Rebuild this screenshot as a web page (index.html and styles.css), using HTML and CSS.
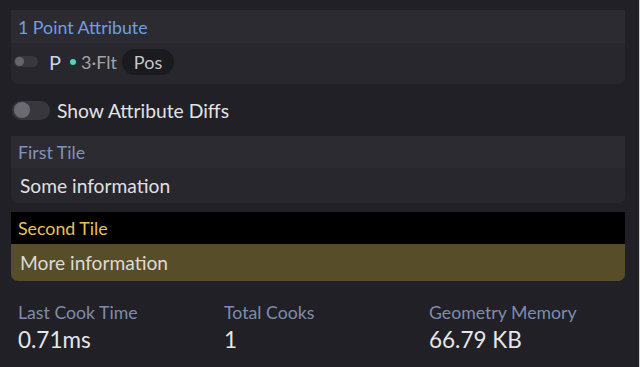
FILE: index.html
```html
<!DOCTYPE html>
<html>
<head>
<meta charset="utf-8">
<link rel="stylesheet" href="styles.css">
</head>
<body>
<div class="page">
  <div class="panel">
    <section class="card">
      <div class="card-head attr-title">1 Point Attribute</div>
      <div class="card-body attr-row">
        <span class="mini-toggle"><span class="mini-knob"></span></span>
        <span class="attr-name">P</span>
        <span class="dot"></span>
        <span class="attr-type">3·Flt</span>
        <span class="pill">Pos</span>
      </div>
    </section>

    <div class="diff-row">
      <span class="toggle"><span class="knob"></span></span>
      <span class="diff-label">Show Attribute Diffs</span>
    </div>

    <section class="card">
      <div class="card-head tile-title">First Tile</div>
      <div class="card-body tile-body">Some information</div>
    </section>

    <section class="card card-gold">
      <div class="card-head tile-title gold-title">Second Tile</div>
      <div class="card-body tile-body gold-body">More information</div>
    </section>

    <div class="stats">
      <div class="stat">
        <div class="stat-label">Last Cook Time</div>
        <div class="stat-value">0.71ms</div>
      </div>
      <div class="stat">
        <div class="stat-label">Total Cooks</div>
        <div class="stat-value">1</div>
      </div>
      <div class="stat">
        <div class="stat-label">Geometry Memory</div>
        <div class="stat-value">66.79 KB</div>
      </div>
    </div>
  </div>
  <div class="edge"></div>
</div>
</body>
</html>
```

FILE: styles.css
```css
html, body {
  margin: 0;
  padding: 0;
  background: #202026;
  font-family: Lato, "Open Sans", sans-serif;
  width: 640px;
  height: 367px;
  overflow: hidden;
}

.page {
  display: flex;
  width: 640px;
  height: 367px;
}

.panel {
  flex: 1;
  display: flex;
  flex-direction: column;
  padding: 10px 14px 0 11px;
}

.edge {
  width: 1px;
  background: #cfcfd2;
}

.card {
  background: #28272d;
  border-radius: 0 0 7px 7px;
  overflow: hidden;
}

.card-head {
  background: #2c2b31;
  padding: 0 7px;
  display: flex;
  align-items: center;
}

.attr-title {
  height: 33px;
  color: #6f9ee4;
  font-size: 17.8px;
}

.attr-row {
  height: 41px;
  display: flex;
  align-items: center;
  padding: 0 3px 4px 3px;
  box-sizing: border-box;
}

.mini-toggle {
  width: 24px;
  height: 11px;
  border-radius: 6px;
  background: #38373d;
  display: flex;
  align-items: center;
  padding-left: 1px;
  box-sizing: border-box;
}

.mini-knob {
  width: 9px;
  height: 9px;
  border-radius: 50%;
  background: #66656d;
}

.attr-name {
  margin-left: 11px;
  color: #c9d2ec;
  font-size: 20px;
}

.dot {
  width: 6px;
  height: 6px;
  border-radius: 50%;
  background: #4fd6b6;
  margin-left: 9px;
}

.attr-type {
  margin-left: 5px;
  color: #a3a3ab;
  font-size: 18px;
}

.pill {
  margin-left: 5px;
  height: 26px;
  padding: 0 12px;
  border-radius: 13px;
  background: #1b1a1f;
  color: #c7c7cc;
  font-size: 18px;
  display: flex;
  align-items: center;
}

.diff-row {
  height: 52px;
  display: flex;
  align-items: center;
  margin-left: 1px;
}

.toggle {
  width: 38px;
  height: 19px;
  border-radius: 10px;
  background: #38373d;
  display: flex;
  align-items: center;
  padding-left: 2px;
  box-sizing: border-box;
}

.knob {
  width: 16px;
  height: 16px;
  border-radius: 50%;
  background: #6b6a73;
}

.diff-label {
  margin-left: 7px;
  color: #e2e2e4;
  font-size: 19.3px;
}

.tile-title {
  height: 32px;
  font-size: 17.8px;
  color: #7f94bb;
}

.tile-body {
  height: 35px;
  display: flex;
  align-items: center;
  padding: 0 9px;
  color: #e0e0e2;
  font-size: 19.2px;
}

.card-gold {
  margin-top: 9px;
}

.gold-title {
  background: #000000;
  color: #e9c05e;
}

.gold-body {
  background: #574e29;
  height: 37px;
  color: #dcdad2;
}

.stats {
  display: grid;
  grid-template-columns: 206px 205px 1fr;
  padding: 21px 7px 0 7px;
}

.stat-label {
  color: #7f8cab;
  font-size: 17.7px;
  line-height: 22px;
}

.stat-value {
  color: #e6e6e8;
  font-size: 22.5px;
  line-height: 32px;
}
```
